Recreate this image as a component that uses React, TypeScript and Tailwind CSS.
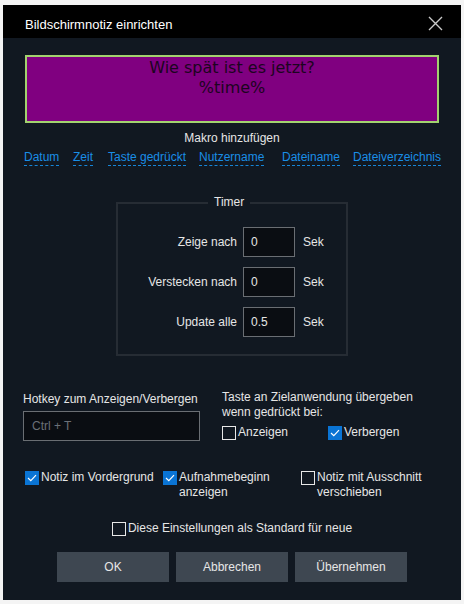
import React from "react";

const font = { fontFamily: '"Liberation Sans", Arial, sans-serif' };

function Check({ checked, children }: { checked?: boolean; children: React.ReactNode }) {
  return (
    <div className="flex items-start gap-[2px]">
      {checked ? (
        <span className="mt-[1px] flex h-[14px] w-[14px] shrink-0 items-center justify-center bg-[#0a74d4]">
          <svg width="10" height="8" viewBox="0 0 10 8">
            <polyline points="1,4 3.8,6.6 9,1.2" fill="none" stroke="#ffffff" strokeWidth="1.2" />
          </svg>
        </span>
      ) : (
        <span className="mt-[1px] h-[14px] w-[14px] shrink-0 border border-[#e8e8e8]" />
      )}
      <span className="leading-[15px]">{children}</span>
    </div>
  );
}

function TimerRow({ label, value }: { label: string; value: string }) {
  return (
    <div className="flex items-center">
      <span className="w-[119px] text-right">{label}</span>
      <div className="ml-[6px] flex h-[30px] w-[52px] items-center border border-[#6a6e73] bg-[#0a0d12] pl-[7px]">
        {value}
      </div>
      <span className="ml-[8px]">Sek</span>
    </div>
  );
}

export default function App() {
  const links: [string, string][] = [
    ["Datum", "w-[49px]"],
    ["Zeit", "w-[35px]"],
    ["Taste gedrückt", "w-[91px]"],
    ["Nutzername", "w-[83px]"],
    ["Dateiname", "w-[71px]"],
    ["Dateiverzeichnis", "w-[90px]"],
  ];

  return (
    <div className="h-[604px] w-[464px] bg-[#f4f4f4] pl-[3px] pt-[5px] text-[12px] text-[#e6e6e6]" style={font}>
      <div className="h-[595px] w-[458px] bg-[#111821]">
        {/* title bar */}
        <div className="flex h-[33px] items-start justify-between bg-black pl-[22px] pr-[18px]">
          <span className="pt-[12px] text-[13px] leading-[16px] text-white">Bildschirmnotiz einrichten</span>
          <svg className="mt-[11px]" width="15" height="15" viewBox="0 0 15 15">
            <path d="M1 1 L14 14 M14 1 L1 14" stroke="#c9c9c9" strokeWidth="1.4" />
          </svg>
        </div>

        {/* preview */}
        <div className="ml-[22px] mt-[17px] flex h-[68px] w-[414px] flex-col items-center border-2 border-[#a3d26f] bg-[#800080] pt-[1px] text-[16px] leading-[20px] text-[#1c0420]" style={{ fontFamily: '"DejaVu Sans", Verdana, sans-serif' }}>
          <span>Wie spät ist es jetzt?</span>
          <span>%time%</span>
        </div>

        <div className="mt-[8px] text-center leading-[15px]">Makro hinzufügen</div>
        <div className="mt-[4px] flex pl-[21px] leading-[15px]">
          {links.map(([t, w]) => (
            <div key={t} className={w}>
              <span className="border-b border-dashed border-[#1585d8] pb-[1px] text-[#1a8ee6]">{t}</span>
            </div>
          ))}
        </div>

        {/* timer group */}
        <div className="relative ml-[113px] mt-[37px] h-[154px] w-[232px] border-2 border-[#262c34] pt-[23px]">
          <span className="absolute left-[90px] top-[-9px] bg-[#111821] px-[6px] leading-[15px]">Timer</span>
          <div className="flex flex-col gap-[10px]">
            <TimerRow label="Zeige nach" value="0" />
            <TimerRow label="Verstecken nach" value="0" />
            <TimerRow label="Update alle" value="0.5" />
          </div>
        </div>

        {/* hotkey */}
        <div className="mt-[34px] flex">
          <div className="ml-[20px] w-[199px] pt-[2px]">
            <div className="leading-[15px]">Hotkey zum Anzeigen/Verbergen</div>
            <div className="mt-[4px] flex h-[30px] w-[177px] items-center border border-[#6a6e73] bg-[#0a0d12] pl-[8px] text-[#6b7078]">
              Ctrl + T
            </div>
          </div>
          <div>
            <div className="leading-[15px]">Taste an Zielanwendung übergeben</div>
            <div className="leading-[15px]">wenn gedrückt bei:</div>
            <div className="mt-[5px] flex">
              <div className="w-[106px]">
                <Check>Anzeigen</Check>
              </div>
              <Check checked>Verbergen</Check>
            </div>
          </div>
        </div>

        <div className="mt-[29px] flex pl-[22px]">
          <div className="w-[138px]">
            <Check checked>Notiz im Vordergrund</Check>
          </div>
          <div className="w-[138px]">
            <Check checked>
              Aufnahmebeginn
              <br />
              anzeigen
            </Check>
          </div>
          <Check>
            Notiz mit Ausschnitt
            <br />
            verschieben
          </Check>
        </div>

        <div className="mt-[21px] flex justify-center">
          <Check>Diese Einstellungen als Standard für neue</Check>
        </div>

        <div className="mt-[16px] flex justify-center gap-[7px]">
          {["OK", "Abbrechen", "Übernehmen"].map((b) => (
            <div key={b} className="flex h-[30px] w-[112px] items-center justify-center bg-[#3e4751]">
              {b}
            </div>
          ))}
        </div>
      </div>
    </div>
  );
}
